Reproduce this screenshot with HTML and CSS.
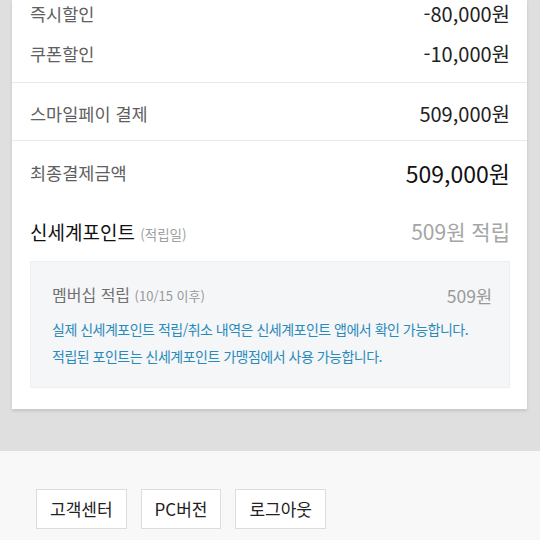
FILE: index.html
```html
<!DOCTYPE html>
<html lang="ko">
<head>
  <meta charset="UTF-8">
  <title>결제 정보</title>
  <link rel="stylesheet" href="styles.css">
</head>
<body>

  <div class="card">
    <div class="section discounts">
      <div class="row">
        <span class="label">즉시할인</span>
        <span class="value">-80,000원</span>
      </div>
      <div class="row">
        <span class="label">쿠폰할인</span>
        <span class="value">-10,000원</span>
      </div>
    </div>

    <div class="section pay">
      <div class="row">
        <span class="label">스마일페이 결제</span>
        <span class="value">509,000원</span>
      </div>
    </div>

    <div class="section total">
      <div class="row">
        <span class="label">최종결제금액</span>
        <span class="value big">509,000원</span>
      </div>
      <div class="row point-row">
        <span class="point-title">신세계포인트 <small>(적립일)</small></span>
        <span class="point-value">509원 적립</span>
      </div>

      <div class="point-box">
        <div class="row">
          <span class="member">멤버십 적립 <small>(10/15 이후)</small></span>
          <span class="member-value">509원</span>
        </div>
        <p class="notice">실제 신세계포인트 적립/취소 내역은 신세계포인트 앱에서 확인 가능합니다.</p>
        <p class="notice">적립된 포인트는 신세계포인트 가맹점에서 사용 가능합니다.</p>
      </div>
    </div>
  </div>

  <div class="footer">
    <a class="foot-btn" href="#">고객센터</a>
    <a class="foot-btn" href="#">PC버전</a>
    <a class="foot-btn" href="#">로그아웃</a>
  </div>

</body>
</html>
```

FILE: styles.css
```css
body {
  margin: 0;
  background-color: #dfdfdf;
  font-family: 'Noto Sans CJK KR', 'Noto Sans', sans-serif;
  color: #222;
}

.card {
  margin: 0 13px 0 12px;
  background-color: #fff;
  box-shadow: 0 2px 3px rgba(0,0,0,0.12);
  padding-bottom: 21px;
}

.section {
  padding: 0 17px 0 18px;
}

.row {
  display: flex;
  justify-content: space-between;
  align-items: center;
}

.discounts {
  padding-top: 2px;
  padding-bottom: 16px;
  border-bottom: 1px solid #e9e9e9;
  display: flex;
  flex-direction: column;
  gap: 16px;
}

.pay {
  padding-top: 19px;
  padding-bottom: 14px;
  border-bottom: 1px solid #e9e9e9;
}

.label {
  font-size: 17.5px;
  line-height: 24px;
  color: #606060;
}

.value {
  font-size: 20px;
  line-height: 24px;
  color: #222;
}

.total {
  padding-top: 16px;
}

.value.big {
  font-size: 23px;
  line-height: 32px;
  color: #111;
}

.point-row {
  margin-top: 27px;
  height: 30px;
}

.point-title {
  font-size: 19px;
  color: #111;
}

.point-title small {
  font-size: 13.5px;
  color: #a0a0a0;
}

.point-value {
  font-size: 21px;
  color: #a5a5a5;
}

.point-box {
  margin-top: 15px;
  background-color: #f5f6f8;
  border: 1px solid #eeeff1;
  padding: 20px 17px 17px 21px;
}

.member {
  font-size: 16px;
  line-height: 24px;
  color: #707070;
}

.member small {
  font-size: 13px;
  color: #999;
}

.member-value {
  font-size: 17.5px;
  color: #9a9a9a;
}

.notice {
  margin: 0;
  font-size: 14px;
  line-height: 27px;
  color: #2a8bba;
  letter-spacing: -0.5px;
}

.point-box .row {
  margin-bottom: 8px;
}

.footer {
  margin-top: 42px;
  background-color: #f8f8f8;
  padding: 38px 36px 40px;
  display: flex;
  gap: 14px;
}

.foot-btn {
  display: inline-block;
  height: 38px;
  line-height: 38px;
  padding: 0 13px;
  background-color: #fff;
  border: 1px solid #dcdcdc;
  font-size: 17px;
  color: #222;
  text-decoration: none;
}
```
